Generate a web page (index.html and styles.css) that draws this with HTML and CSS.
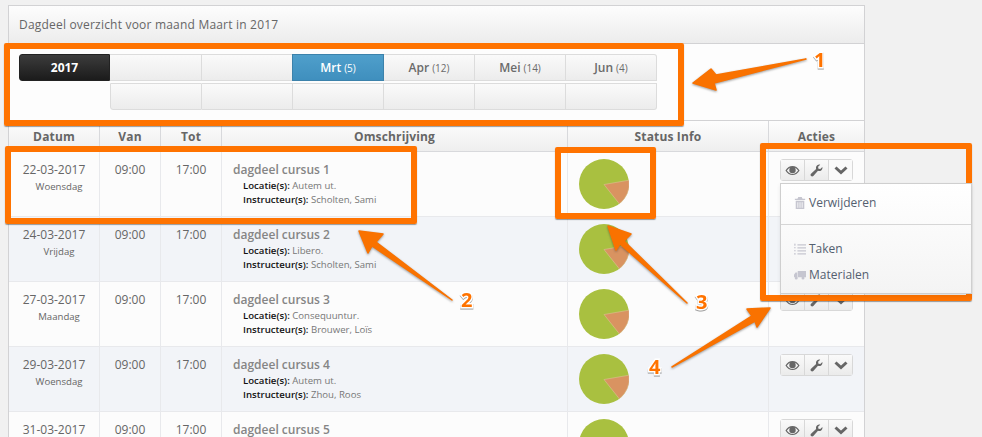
FILE: index.html
```html
<!DOCTYPE html>
<html lang="en">
<head>
  <meta charset="UTF-8" />
  <meta name="viewport" content="width=device-width, initial-scale=1.0"/>
  <title>Dagdeel overzicht</title>
  <link rel="stylesheet" href="styles.css">
</head>
<body>
  <svg class="icon-defs" width="0" height="0">
    <symbol id="i-eye" viewBox="0 0 16 12">
      <path fill-rule="evenodd" d="M0.3 6C2.4 2.6 5 1 8 1s5.600 1.600 7.700 5c-2.100 3.400-4.700 5-7.700 5S2.400 9.400.3 6zM1.900 6c1.600 2.300 3.700 3.700 6.100 3.700S12.500 8.300 14.100 6C13 4.400 11.800 3.300 10.400 2.700c.7.700 1.100 1.600 1.100 2.700A3.500 3.500 0 0 1 8 9a3.500 3.500 0 0 1-3.500-3.600c0-1.100.4-2 1.100-2.700C4.200 3.300 3 4.400 1.900 6z"/>
    </symbol>
    <symbol id="i-wrench" viewBox="0 0 14 14">
      <path d="M13.300 3.100c.3 1.300 0 2.600-1 3.500-1 1-2.400 1.300-3.700.8L3.600 13c-.7.700-1.800.7-2.500 0s-.7-1.800 0-2.500l5.500-5.100c-.4-1.300-.1-2.700.9-3.700.9-.9 2.200-1.300 3.500-1L8.700 3l.4 2 2 .5z"/>
    </symbol>
    <symbol id="i-chevron" viewBox="0 0 14 10">
      <path d="M1.500 2.500l5.500 5 5.500-5" fill="none" stroke="currentColor" stroke-width="3"/>
    </symbol>
    <symbol id="i-trash" viewBox="0 0 12 14">
      <path fill-rule="evenodd" d="M4 0h4l1 2h3v1.500H0V2h3zM1 4.500h10V14H1zM3 6v6.500h1V6zm2.500 0v6.500h1V6zM8 6v6.500h1V6z"/>
    </symbol>
    <symbol id="i-list" viewBox="0 0 14 14">
      <path d="M4 1.500h10v1.500H4zM4 5h10v1.500H4zM4 8.500h10V10H4zM4 12h10v1.500H4zM0 1h2v1H0zM0 2.500h2v.8H0zM0 5h2v1H0zM0 8.500h2v1H0zM0 12h2v1.500H0z"/>
    </symbol>
    <symbol id="i-truck" viewBox="0 0 16 13">
      <path d="M5 1h11v8.500H5zM0 6l2-3h2.300v6.500H0z"/>
      <circle cx="3" cy="10.500" r="2"/>
      <circle cx="12" cy="10.500" r="2"/>
    </symbol>
    <symbol id="i-pie" viewBox="0 0 50 50">
      <circle cx="25" cy="25" r="25" fill="#a9c040"/>
      <path d="M25 25.500L50 21.200A25 25 0 0 1 40.300 44.800z" fill="#d99361" stroke="#dfc9a0" stroke-width=".5"/>
    </symbol>
  </svg>

  <div class="panel">
    <div class="panel-title">Dagdeel overzicht voor maand Maart in 2017</div>

    <div class="calendar">
      <div class="cal-btn cal-year">2017</div>
      <div class="cal-btn"></div>
      <div class="cal-btn"></div>
      <div class="cal-btn cal-active">Mrt <small>(5)</small></div>
      <div class="cal-btn">Apr <small>(12)</small></div>
      <div class="cal-btn">Mei <small>(14)</small></div>
      <div class="cal-btn cal-end-top">Jun <small>(4)</small></div>
      <div class="cal-spacer"></div>
      <div class="cal-btn cal-start-bottom"></div>
      <div class="cal-btn"></div>
      <div class="cal-btn"></div>
      <div class="cal-btn"></div>
      <div class="cal-btn"></div>
      <div class="cal-btn cal-end-bottom"></div>
    </div>

    <table class="rooster">
      <colgroup>
        <col class="col-date"><col class="col-time"><col class="col-time">
        <col class="col-desc"><col class="col-status"><col class="col-actions">
      </colgroup>
      <thead>
        <tr>
          <th>Datum</th><th>Van</th><th>Tot</th><th>Omschrijving</th><th>Status Info</th><th>Acties</th>
        </tr>
      </thead>
      <tbody>
        <tr>
          <td class="center">22-03-2017<span class="day">Woensdag</span></td>
          <td class="center">09:00</td>
          <td class="center">17:00</td>
          <td>
            <div class="name">dagdeel cursus 1</div>
            <div class="meta"><b>Locatie(s):</b> Autem ut.</div>
            <div class="meta"><b>Instructeur(s):</b> Scholten, Sami</div>
          </td>
          <td class="status"><svg class="pie"><use href="#i-pie"/></svg></td>
          <td class="actions">
            <div class="btn-group">
              <span class="btn"><svg class="i-eye"><use href="#i-eye"/></svg></span>
              <span class="btn"><svg class="i-wrench"><use href="#i-wrench"/></svg></span>
              <span class="btn btn-open"><svg class="i-chevron"><use href="#i-chevron"/></svg></span>
              <div class="menu">
                <div class="menu-item item-first"><svg class="menu-icon"><use href="#i-trash"/></svg>Verwijderen</div>
                <div class="menu-sep"></div>
                <div class="menu-item"><svg class="menu-icon"><use href="#i-list"/></svg>Taken</div>
                <div class="menu-item"><svg class="menu-icon"><use href="#i-truck"/></svg>Materialen</div>
              </div>
            </div>
          </td>
        </tr>
        <tr>
          <td class="center">24-03-2017<span class="day">Vrijdag</span></td>
          <td class="center">09:00</td>
          <td class="center">17:00</td>
          <td>
            <div class="name">dagdeel cursus 2</div>
            <div class="meta"><b>Locatie(s):</b> Libero.</div>
            <div class="meta"><b>Instructeur(s):</b> Scholten, Sami</div>
          </td>
          <td class="status"><svg class="pie"><use href="#i-pie"/></svg></td>
          <td class="actions">
            <div class="btn-group">
              <span class="btn"><svg class="i-eye"><use href="#i-eye"/></svg></span>
              <span class="btn"><svg class="i-wrench"><use href="#i-wrench"/></svg></span>
              <span class="btn"><svg class="i-chevron"><use href="#i-chevron"/></svg></span>
            </div>
          </td>
        </tr>
        <tr>
          <td class="center">27-03-2017<span class="day">Maandag</span></td>
          <td class="center">09:00</td>
          <td class="center">17:00</td>
          <td>
            <div class="name">dagdeel cursus 3</div>
            <div class="meta"><b>Locatie(s):</b> Consequuntur.</div>
            <div class="meta"><b>Instructeur(s):</b> Brouwer, Loïs</div>
          </td>
          <td class="status"><svg class="pie"><use href="#i-pie"/></svg></td>
          <td class="actions">
            <div class="btn-group">
              <span class="btn"><svg class="i-eye"><use href="#i-eye"/></svg></span>
              <span class="btn"><svg class="i-wrench"><use href="#i-wrench"/></svg></span>
              <span class="btn"><svg class="i-chevron"><use href="#i-chevron"/></svg></span>
            </div>
          </td>
        </tr>
        <tr>
          <td class="center">29-03-2017<span class="day">Woensdag</span></td>
          <td class="center">09:00</td>
          <td class="center">17:00</td>
          <td>
            <div class="name">dagdeel cursus 4</div>
            <div class="meta"><b>Locatie(s):</b> Autem ut.</div>
            <div class="meta"><b>Instructeur(s):</b> Zhou, Roos</div>
          </td>
          <td class="status"><svg class="pie"><use href="#i-pie"/></svg></td>
          <td class="actions">
            <div class="btn-group">
              <span class="btn"><svg class="i-eye"><use href="#i-eye"/></svg></span>
              <span class="btn"><svg class="i-wrench"><use href="#i-wrench"/></svg></span>
              <span class="btn"><svg class="i-chevron"><use href="#i-chevron"/></svg></span>
            </div>
          </td>
        </tr>
        <tr>
          <td class="center">31-03-2017<span class="day">Vrijdag</span></td>
          <td class="center">09:00</td>
          <td class="center">17:00</td>
          <td>
            <div class="name">dagdeel cursus 5</div>
            <div class="meta"><b>Locatie(s):</b> Libero.</div>
            <div class="meta"><b>Instructeur(s):</b> Zhou, Roos</div>
          </td>
          <td class="status"><svg class="pie"><use href="#i-pie"/></svg></td>
          <td class="actions">
            <div class="btn-group">
              <span class="btn"><svg class="i-eye"><use href="#i-eye"/></svg></span>
              <span class="btn"><svg class="i-wrench"><use href="#i-wrench"/></svg></span>
              <span class="btn"><svg class="i-chevron"><use href="#i-chevron"/></svg></span>
            </div>
          </td>
        </tr>
      </tbody>
    </table>
  </div>

  <!-- annotations drawn on top of the screenshot -->
  <div class="mark mark-1"></div>
  <div class="mark mark-2"></div>
  <div class="mark mark-3"></div>
  <div class="mark mark-4"></div>

  <svg class="arrows" width="982" height="437">
    <polygon points="806,59 716,75 711,69 693,83 716,90 714,83"/>
    <polygon points="452,300 376,242 383,234 359,231 368,253 372,246"/>
    <polygon points="687,303 624,241 631,234 608,226 616,250 620,244"/>
    <polygon points="672,367 752,316 747,309 770,308 757,327 755,321"/>
  </svg>

  <span class="num num-1">1</span>
  <span class="num num-2">2</span>
  <span class="num num-3">3</span>
  <span class="num num-4">4</span>
</body>
</html>
```

FILE: styles.css
```css
:root {
  --border: #d2d2d4;
  --line: #e8e9ec;
  --text: #666;
  --orange: #ff7300;
}

* {
  margin: 0;
  padding: 0;
  box-sizing: border-box;
}

html, body {
  height: 100%;
  overflow: hidden;
}

body {
  position: relative;
  padding: 5px 0 0 8px;
  background-color: #f1f1f1;
  color: var(--text);
  font-family: "Open Sans", sans-serif;
  font-size: 12px;
}

.icon-defs {
  position: absolute;
}

.panel {
  width: 857px;
  background-color: #fdfdfd;
  border: 1px solid var(--border);
  border-bottom: none;
}

.panel-title {
  height: 38px;
  padding-left: 10px;
  line-height: 38px;
  font-size: 12px;
  letter-spacing: 0.2px;
  background: linear-gradient(#fdfdfd, #ececec);
  border-bottom: 1px solid var(--border);
}

/* month picker */
.calendar {
  display: grid;
  grid-template-columns: 91px 92px repeat(5, 91px);
  grid-auto-rows: 27px;
  row-gap: 2px;
  height: 77px;
  padding: 10px 0 0 10px;
  border-bottom: 1px solid var(--border);
}

.cal-btn {
  display: flex;
  align-items: center;
  justify-content: center;
  gap: 3px;
  background: linear-gradient(#fafafa, #ececec);
  border: 1px solid #dcdcdc;
  border-left: none;
  font-weight: 600;
  color: #6b6b6b;
}

.cal-btn small {
  font-size: 10px;
  font-weight: 400;
}

.cal-year {
  background: linear-gradient(#3c3c3c, #1b1b1b);
  border: 1px solid #222;
  border-radius: 3px 0 0 3px;
  color: #fff;
  font-weight: 700;
}

.cal-active {
  margin-left: -1px;
  background: linear-gradient(#4f9fcb, #3f8fbe);
  border: 1px solid #3c82ab;
  color: #fff;
}

.cal-end-top {
  border-radius: 0 3px 0 0;
}

.cal-start-bottom {
  border-left: 1px solid #dcdcdc;
  border-radius: 0 0 0 3px;
}

.cal-end-bottom {
  border-radius: 0 0 3px 0;
}

/* table */
.rooster {
  width: 855px;
  table-layout: fixed;
  border-collapse: separate;
  border-spacing: 0;
}

.col-date { width: 91px; }
.col-time { width: 61px; }
.col-desc { width: 346px; }
.col-status { width: 201px; }
.col-actions { width: 95px; }

.rooster th {
  height: 31px;
  background: linear-gradient(#fdfdfd, #eeeeee);
  border-right: 1px solid #d8d9dc;
  border-bottom: 1px solid #d8d9dc;
  font-size: 12px;
  font-weight: 700;
  letter-spacing: 0.15px;
  text-align: center;
}

.rooster td {
  height: 65px;
  padding: 9px 11px 0;
  vertical-align: top;
  line-height: 17px;
  background-color: #fcfcfc;
  border-right: 1px solid var(--line);
  border-bottom: 1px solid var(--line);
}

.rooster tbody tr:nth-child(even) td {
  background-color: #f2f4f8;
}

.rooster th:last-child,
.rooster td:last-child {
  border-right: none;
}

.rooster .center {
  padding-left: 0;
  padding-right: 0;
  text-align: center;
}

.day {
  display: block;
  margin-left: 10px;
  font-size: 9.6px;
}

.name {
  margin-bottom: 1px;
  font-weight: 600;
  color: #858585;
}

.meta {
  padding-left: 10px;
  font-size: 9.6px;
  line-height: 14px;
  color: #777;
}

.meta b {
  font-weight: 600;
  color: #111;
}

.rooster .status {
  padding: 7px 0 0 11px;
}

.pie {
  display: block;
  width: 50px;
  height: 50px;
}

.rooster .actions {
  padding: 7px 0 0 11px;
}

/* action buttons */
.btn-group {
  position: relative;
  display: flex;
  width: 73px;
  height: 22px;
  border: 1px solid #d8d8d8;
  border-radius: 3px;
}

.btn {
  display: flex;
  align-items: center;
  justify-content: center;
  flex: 1;
  background: linear-gradient(#fafafa, #ebebeb);
  border-right: 1px solid #d8d8d8;
  color: #666;
}

.btn:last-of-type {
  border-right: none;
}

.btn-open {
  background: #fafafa;
}

.i-eye {
  width: 15px;
  height: 11px;
  fill: #666;
}

.i-wrench {
  width: 13px;
  height: 13px;
  fill: #666;
}

.i-chevron {
  width: 14px;
  height: 10px;
}

.menu {
  position: absolute;
  top: 23px;
  left: -1px;
  width: 192px;
  height: 111px;
  background: linear-gradient(#fff, #f4f4f4);
  border: 1px solid #cfcfcf;
  box-shadow: 0 2px 4px rgba(0, 0, 0, 0.08);
  z-index: 2;
}

.menu-item {
  display: flex;
  align-items: center;
  height: 26px;
  padding-left: 13px;
  font-size: 12px;
  line-height: 26px;
  color: #546070;
}

.item-first {
  margin-top: 7px;
  height: 24px;
}

.menu-sep {
  height: 1px;
  margin: 9px 0 11px;
  background-color: #d6d6d6;
}

.menu-icon {
  flex: none;
  width: 12px;
  height: 12px;
  margin-right: 3px;
  fill: #c6c6d0;
}

/* annotations */
.mark {
  position: absolute;
  border: 6px solid var(--orange);
  border-radius: 2px;
  box-shadow: 0 1px 1px rgba(60, 60, 60, 0.5);
}

.mark-1 { left: 4px; top: 43px; width: 680px; height: 83px; }
.mark-2 { left: 5px; top: 146px; width: 412px; height: 78px; }
.mark-3 { left: 555px; top: 147px; width: 101px; height: 72px; }
.mark-4 { left: 760px; top: 143px; width: 212px; height: 158px; }

.arrows {
  position: absolute;
  left: 0;
  top: 0;
  fill: #f97200;
  stroke: #f97200;
  stroke-width: 1.5;
  stroke-linejoin: round;
  filter: drop-shadow(0 1px 1px rgba(60, 60, 60, 0.5));
}

.num {
  position: absolute;
  font-family: "Open Sans", sans-serif;
  font-size: 20px;
  font-weight: 700;
  line-height: 20px;
  color: var(--orange);
  -webkit-text-stroke: 3px #fff;
  paint-order: stroke fill;
  filter: drop-shadow(0 1px 0.5px rgba(60, 60, 60, 0.5));
}

.num-1 { left: 814px; top: 50px; }
.num-2 { left: 461px; top: 290px; }
.num-3 { left: 696px; top: 292px; }
.num-4 { left: 649px; top: 357px; }
```
